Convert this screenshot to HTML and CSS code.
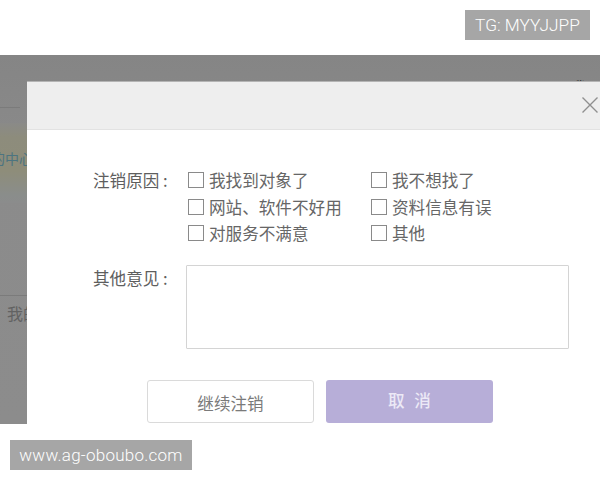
FILE: index.html
```html
<!DOCTYPE html>
<html lang="zh">
<head>
<meta charset="utf-8">
<title>注销</title>
<link rel="stylesheet" href="styles.css">
</head>
<body>
<div class="page">
  <div class="topbar"></div>
  <div class="screen">
    <div class="backdrop-rule rule-top"></div>
    <div class="notice"></div>
    <div class="notice-text">的中心</div>
    <div class="backdrop-rule rule-bottom"></div>
    <div class="backdrop-text">我的</div>
    <div class="corner-text">我要</div>
    <div class="modal">
      <div class="modal-head">
        <svg class="close" viewBox="0 0 18 18" aria-label="关闭"><path d="M1.5 1.5 16.5 16.5M16.5 1.5 1.5 16.5"/></svg>
      </div>
      <div class="modal-body">
        <div class="form-row">
          <div class="label">注销原因 :</div>
          <div class="options">
            <label class="option"><span class="box"></span>我找到对象了</label>
            <label class="option"><span class="box"></span>我不想找了</label>
            <label class="option"><span class="box"></span>网站、软件不好用</label>
            <label class="option"><span class="box"></span>资料信息有误</label>
            <label class="option"><span class="box"></span>对服务不满意</label>
            <label class="option"><span class="box"></span>其他</label>
          </div>
        </div>
        <div class="form-row comments">
          <div class="label">其他意见 :</div>
          <div class="textarea"></div>
        </div>
        <div class="actions">
          <div class="btn btn-ghost">继续注销</div>
          <div class="btn btn-primary">取 消</div>
        </div>
      </div>
    </div>
  </div>
  <div class="mark mark-tg">TG: MYYJJPP</div>
  <div class="mark mark-url">www.ag-oboubo.com</div>
</div>
</body>
</html>
```
FILE: styles.css
```css
* { box-sizing: border-box; }
html, body { margin: 0; padding: 0; background: #fff; }
.page {
  position: relative;
  width: 600px;
  height: 480px;
  overflow: hidden;
  font-family: "Noto Sans CJK SC", "Liberation Sans", sans-serif;
}
.topbar { height: 55px; background: #fff; }
.screen {
  position: relative;
  height: 369px;
  overflow: hidden;
  background: linear-gradient(#858585, #8b8b8b 30%, #8c8c8c);
}
.backdrop-rule { position: absolute; left: 0; height: 1px; background: #7b7b7b; }
.rule-top { top: 52px; width: 20px; }
.rule-bottom { top: 240px; width: 27px; }
.notice {
  position: absolute;
  left: 0; top: 68px;
  width: 27px; height: 80px;
  background: linear-gradient(#8a8a88, #8d8c7c 18%, #8e8d7a 60%, #8a8d8b 90%, #8b8c8c);
}
.notice-text {
  position: absolute;
  left: -9px; top: 93px;
  font-size: 14px;
  line-height: 20px;
  color: #4c7480;
  white-space: nowrap;
}
.backdrop-text {
  position: absolute;
  left: 7px; top: 248px;
  font-size: 16px;
  line-height: 20px;
  color: #626262;
  white-space: nowrap;
}
.corner-text {
  position: absolute;
  left: 571px; top: 22px;
  font-size: 16px;
  line-height: 20px;
  color: #222;
  white-space: nowrap;
}
.modal {
  position: absolute;
  left: 27px; top: 26px;
  width: 600px; height: 360px;
  background: #fff;
  border-top: 1px solid #b4b4b4;
}
.modal-head {
  height: 48px;
  background: #eeeeee;
  border-bottom: 1px solid #e2e2e2;
  padding: 14px 0 0 554px;
}
.close { display: block; width: 18px; height: 18px; }
.close path { fill: none; stroke: #8f8f8f; stroke-width: 1.4; }
.modal-body { padding: 37px 0 0 66px; color: #666; }
.form-row { display: flex; line-height: 26.5px; }
.label { width: 93px; font-size: 16.6px; color: #5e5e5e; white-space: nowrap; }
.options {
  display: grid;
  grid-template-columns: 183px 1fr;
  grid-auto-rows: 26.5px;
  padding-left: 2px;
}
.option { display: flex; align-items: center; white-space: nowrap; font-size: 16.6px; color: #666; }
.box {
  width: 16px; height: 16px;
  margin-right: 5px;
  border: 1.5px solid #8a8a8a;
  background: #fff;
  flex: none;
}
.comments { margin-top: 18px; }
.comments .label { line-height: 26px; }
.textarea {
  width: 383px; height: 84px;
  background: #fff;
  border: 1.5px solid #d4d4d4;
  border-radius: 1px;
}
.actions { display: flex; gap: 12px; margin: 31px 0 0 54px; }
.btn {
  width: 167px; height: 43px;
  border-radius: 3px;
  display: flex;
  align-items: center;
  justify-content: center;
  font-size: 16.6px;
}
.btn-ghost { border: 1.5px solid #dadada; color: #7a7a7a; padding-top: 3px; }
.btn-primary { background: #b7aed8; color: #ece9f6; font-weight: 500; white-space: pre; word-spacing: 6px; padding-bottom: 2px; }
.mark {
  position: absolute;
  background: #a6a6a6;
  color: #fff;
  height: 30px;
  line-height: 30px;
  font-family: Roboto, "Liberation Sans", sans-serif;
  font-weight: 300;
  font-size: 17px;
  text-align: center;
  white-space: nowrap;
}
.mark-tg { left: 465px; top: 10px; width: 125px; font-size: 17.3px; }
.mark-url { left: 10px; top: 440px; width: 182px; letter-spacing: .25px; }
```
